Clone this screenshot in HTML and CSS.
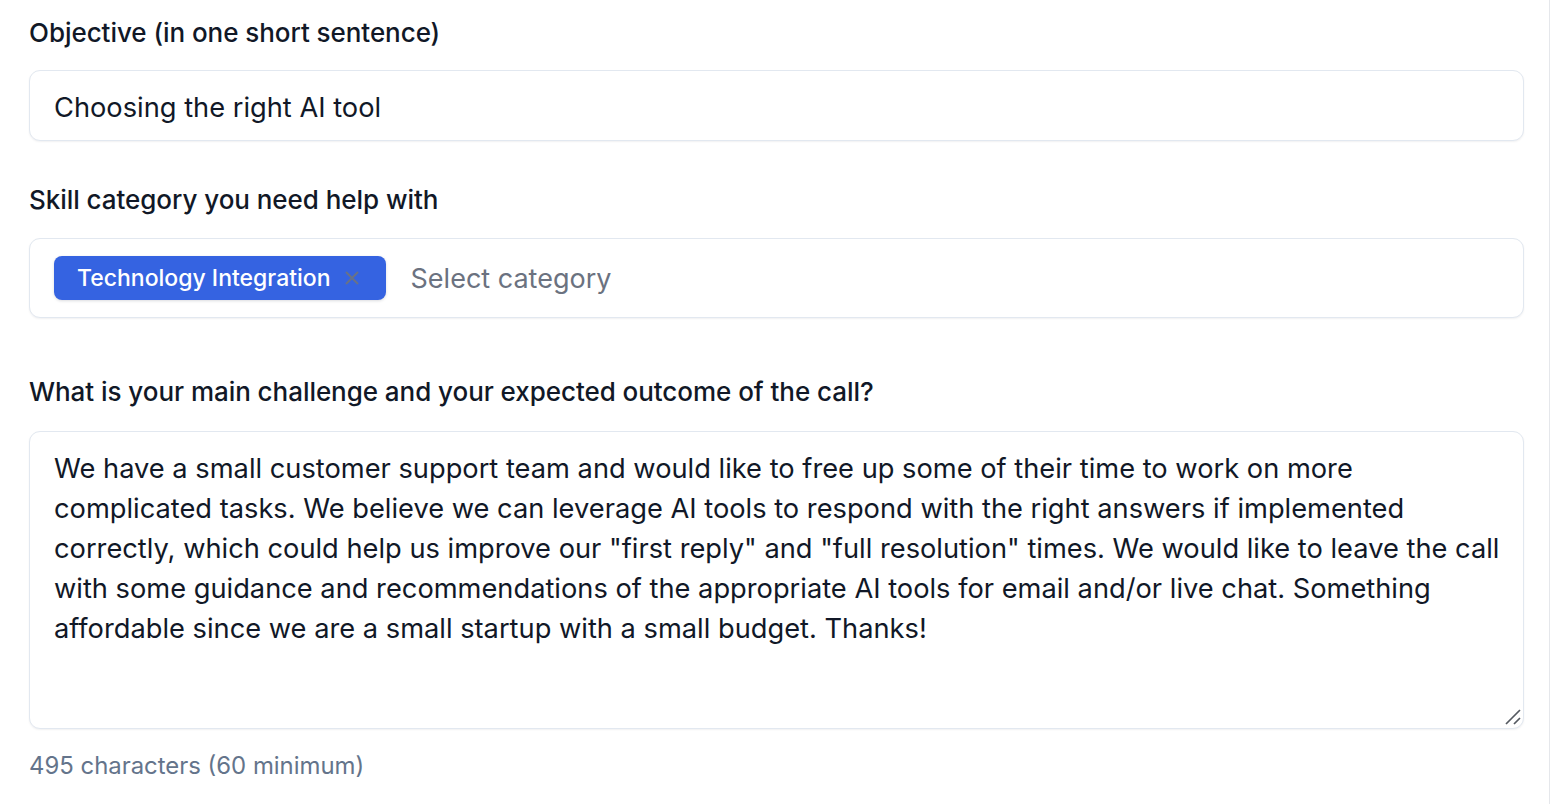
FILE: index.html
```html
<!DOCTYPE html>
<html lang="en">
<head>
<meta charset="utf-8">
<title>Booking form</title>
<link rel="stylesheet" href="styles.css">
</head>
<body>
<main class="form">
  <div class="field">
    <label class="label" for="objective">Objective (in one short sentence)</label>
    <input class="input" id="objective" type="text" value="Choosing the right AI tool">
  </div>

  <div class="field field-select">
    <label class="label">Skill category you need help with</label>
    <div class="select">
      <span class="tag">Technology Integration <svg class="tag-x" width="14" height="14" viewBox="0 0 14 14" aria-hidden="true"><path d="M1 1 L13 13 M13 1 L1 13"/></svg></span>
      <span class="placeholder">Select category</span>
    </div>
  </div>

  <div class="field field-wide">
    <label class="label" for="challenge">What is your main challenge and your expected outcome of the call?</label>
    <div class="textarea-wrap">
      <textarea class="textarea" id="challenge">We have a small customer support team and would like to free up some of their time to work on more complicated tasks. We believe we can leverage AI tools to respond with the right answers if implemented correctly, which could help us improve our "first reply" and "full resolution" times. We would like to leave the call with some guidance and recommendations of the appropriate AI tools for email and/or live chat. Something affordable since we are a small startup with a small budget. Thanks!</textarea>
      <svg class="grip" width="18" height="18" viewBox="0 0 18 18" aria-hidden="true"><path d="M2 16 L16 2 M10 16 L16 10"/></svg>
    </div>
    <p class="hint">495 characters (60 minimum)</p>
  </div>
</main>
</body>
</html>
```

FILE: styles.css
```css
html, body {
  margin: 0;
  padding: 0;
  background: #ffffff;
}

body {
  font-family: Inter, "Noto Sans", sans-serif;
  color: #111827;
  height: 804px;
  overflow: hidden;
}

.form {
  box-sizing: border-box;
  width: 1550px;
  height: 804px;
  padding: 15px 25px 0 29px;
  border-right: 1px solid #e5e7eb;
  display: flex;
  flex-direction: column;
}

.field {
  display: flex;
  flex-direction: column;
  margin-bottom: 41px;
}

.field-wide {
  margin-top: 15px;
}

.label {
  font-size: 26px;
  font-weight: 500;
  line-height: 36px;
  color: #111827;
  margin-bottom: 19px;
  letter-spacing: -0.05px;
}

.field-select .label {
  margin-bottom: 20px;
}

.field-wide .label {
  margin-bottom: 21px;
}

.input,
.select,
.textarea {
  box-sizing: border-box;
  width: 100%;
  border: 1px solid #e2e8f0;
  border-radius: 11px;
  background: #ffffff;
  box-shadow: 0 1px 2px rgba(15, 23, 42, 0.06);
  font-family: Inter, "Noto Sans", sans-serif;
  font-size: 27.25px;
  color: #111827;
  outline: none;
}

.input {
  height: 71px;
  padding: 3px 24px 0;
}

.select {
  height: 80px;
  padding: 0 24px;
  display: flex;
  align-items: center;
  gap: 25px;
}

.tag {
  display: inline-flex;
  align-items: center;
  gap: 14px;
  height: 44px;
  padding: 0 27px 0 23px;
  background: #3563e1;
  color: #ffffff;
  border-radius: 8px;
  font-size: 23px;
  font-weight: 500;
  box-shadow: 0 1px 3px rgba(15, 23, 42, 0.15);
  box-sizing: border-box;
}

.tag-x {
  stroke: #687287;
  stroke-width: 2;
  fill: none;
}

.placeholder {
  color: #6b7280;
  font-size: 27px;
}

.textarea-wrap {
  position: relative;
}

.textarea {
  height: 298px;
  padding: 17px 20px 17px 24px;
  line-height: 40px;
  resize: none;
  display: block;
}

.grip {
  position: absolute;
  right: 2px;
  bottom: 3px;
  stroke: #555a61;
  stroke-width: 1.7;
  fill: none;
  pointer-events: none;
}

.hint {
  margin: 19px 0 0;
  font-size: 23.9px;
  line-height: 36px;
  color: #64748b;
}
```
